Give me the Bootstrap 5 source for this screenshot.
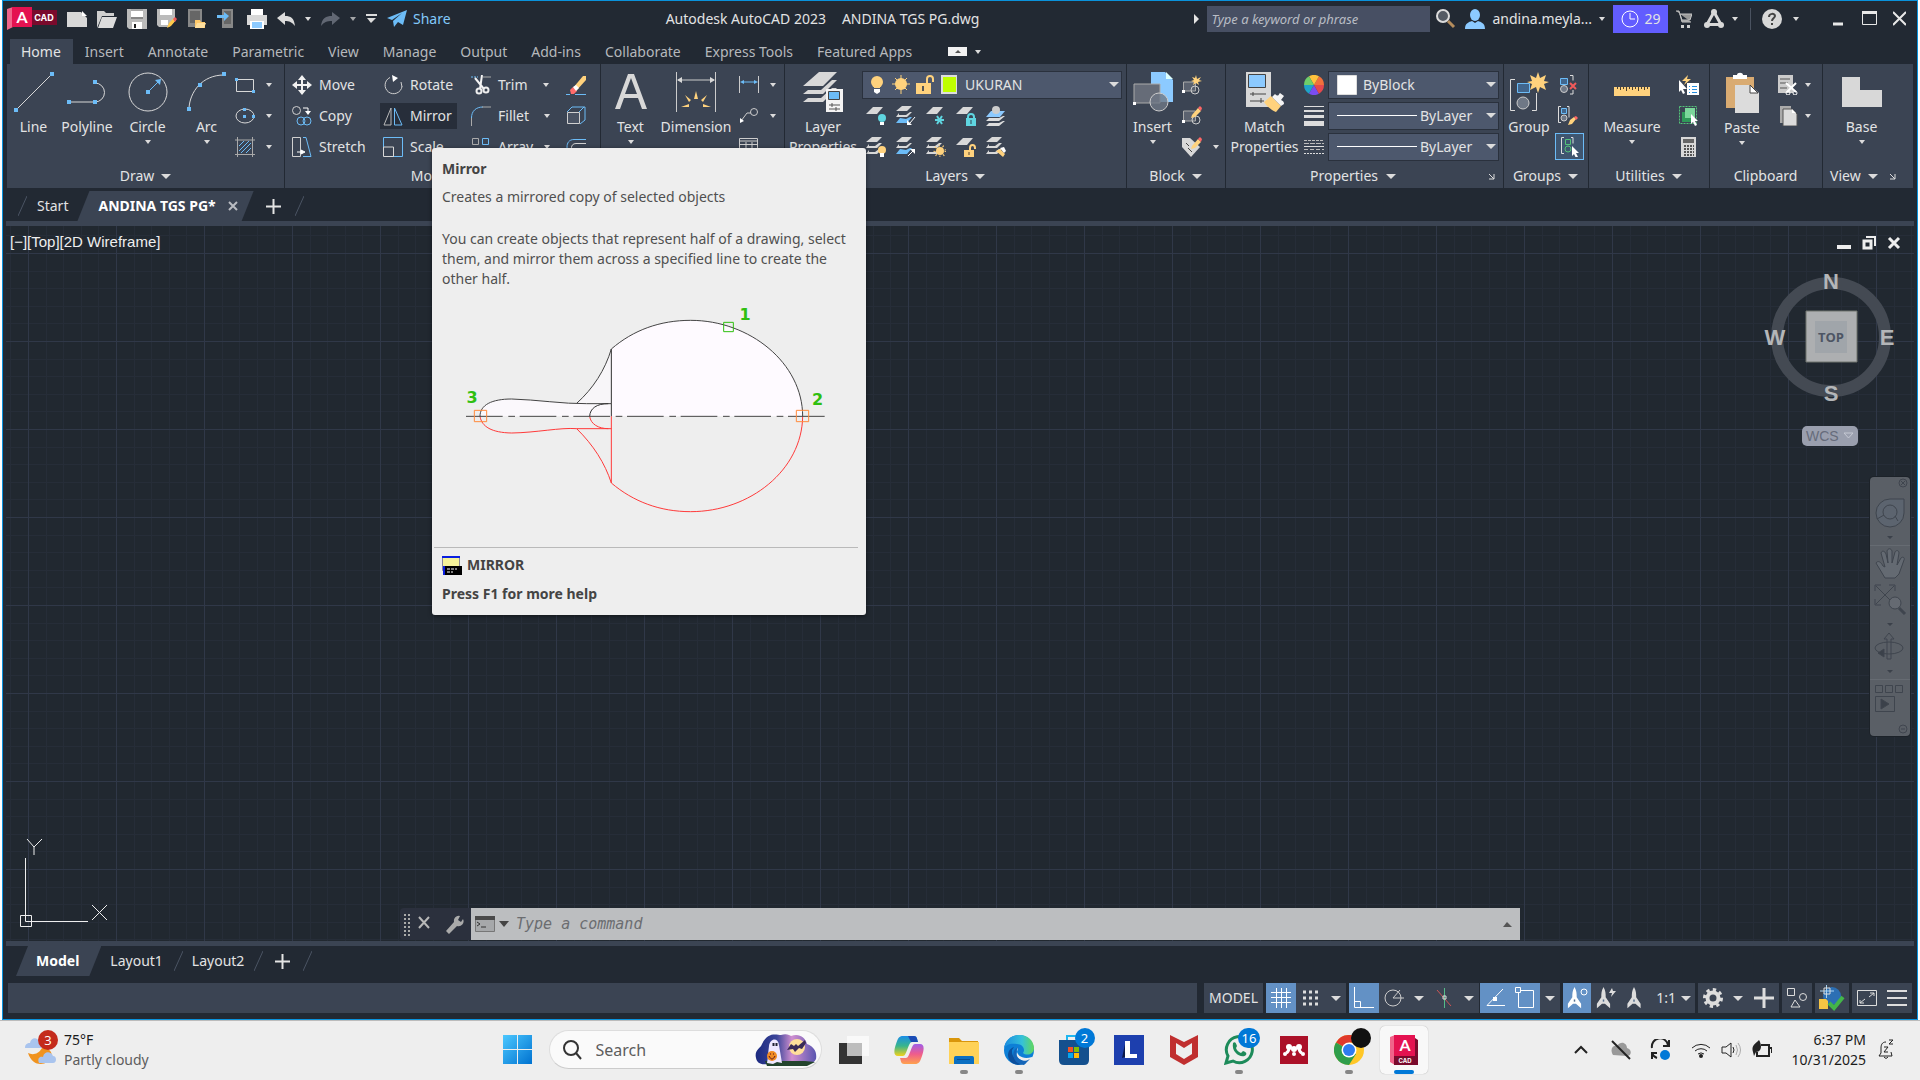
<!DOCTYPE html>
<html lang="en">
<head>
<meta charset="utf-8">
<meta name="viewport" content="width=device-width, initial-scale=1">
<title>Autodesk AutoCAD 2023 - ANDINA TGS PG.dwg</title>
<link href="https://cdn.jsdelivr.net/npm/bootstrap@5.3.0/dist/css/bootstrap.min.css" rel="stylesheet">
<style>
:root{--ink:#e2e3e4;--panel:#3b4453;--frame:#222933;--blue:#6cbcf7;--gold:#ffd27d;--grey:#d8d8d8}
body{font-family:"Noto Sans","Open Sans",sans-serif;font-size:14px;line-height:20px;background:#fff;overflow:hidden}
button,select,input{font:inherit;color:inherit}
svg{display:block;flex:none;fill:none}
button,.plain{background:none;border:0;padding:0;color:inherit;text-decoration:none}
.win{margin:0 2px;border:1px solid #0a92dc;background:var(--frame);color:var(--ink)}
.car{display:inline-block;flex:none;width:0;height:0;border:3px solid transparent;border-top:4px solid #dcdcdc;border-bottom:0}
.car.big{border-width:5px;border-top-width:5px;border-bottom:0}
.titlebar{height:38px;padding-bottom:3px}
.kwbox{width:223px;height:26px;background:#474f63;border:0;padding:0 4px;font-style:italic;font-size:13px}
.kwbox::placeholder{color:#b9bdc5;opacity:1}
.trial{background:#625dff;width:55px;height:28px}
.rtabs{height:25px;padding-left:7px;color:#b5b8bc}
.rtab{height:25px;padding:0 12px;color:inherit;text-decoration:none;line-height:25px}
.rtab.on{background:var(--panel);color:var(--ink);padding:0 12px 0 11px}
.ribbon{height:124px;background:var(--panel)}
.pn{box-shadow:inset 1px 0 var(--frame);display:flex;flex-direction:column;min-width:0}
.pn:first-child{box-shadow:none}
.pbody{height:98px;padding-top:5px;display:grid;align-items:start}
.ptitle{height:26px;line-height:24px;padding-top:2px;display:flex;align-items:center;justify-content:center;gap:7px}
.bigb{display:flex;flex-direction:column;align-items:center;padding-top:3px;white-space:nowrap;text-align:center}
.bigb svg{margin-bottom:5px}
.bigb .car{margin-top:3px}
.stack{display:flex;flex-direction:column}
.srow{height:31px;display:flex;align-items:center}
.sb{height:26px;padding:0 3px;display:flex;align-items:center;gap:7px;white-space:nowrap}
.sb.hot{background:#272e3a;padding-right:5px}
.icg{gap:10px;padding-left:4px}
.combo{height:28px;background:#4d586d;border:1px solid #2a313d;display:flex;align-items:center;flex:1;min-width:0;padding-right:2px}
.combo select{appearance:none;background:none;border:0;padding:0;flex:1;min-width:0;outline:0}
.combo option{color:#222}
.grpon{border:1px solid #6cbcf7;background:#3f5670;width:29px;height:27px;display:flex;align-items:center;justify-content:center}
.ftabs{height:33px;padding-left:15px}
.slant{clip-path:polygon(12px 0,100% 0,calc(100% - 12px) 100%,0 100%);background:var(--panel);height:30px;color:#fff;font-weight:700;display:flex;align-items:center}
.slash{width:9px;height:20px;flex:none}
.strip{height:5px;background:var(--panel);margin:0 3px;flex:none}
.cv{margin:0 3px;position:relative;background-color:#212830;background-position:22px 0,0 27px,22px 0,0 27px;background-size:88px 88px;
background-image:linear-gradient(90deg,#303848 1px,transparent 1px),linear-gradient(#303848 1px,transparent 1px),
linear-gradient(90deg,transparent 18px,#262d38 18px,#262d38 19px,transparent 19px,transparent 35px,#262d38 35px,#262d38 36px,transparent 36px,transparent 53px,#262d38 53px,#262d38 54px,transparent 54px,transparent 70px,#262d38 70px,#262d38 71px,transparent 71px),
linear-gradient(transparent 18px,#262d38 18px,#262d38 19px,transparent 19px,transparent 35px,#262d38 35px,#262d38 36px,transparent 36px,transparent 53px,#262d38 53px,#262d38 54px,transparent 54px,transparent 70px,#262d38 70px,#262d38 71px,transparent 71px)}
.vlabel{position:absolute;left:4px;top:6px;font-family:"Liberation Sans",sans-serif;font-size:15px;color:#eee}
.vwin{position:absolute;right:13px;top:10px;gap:11px}
.vcube{position:absolute;right:19px;top:42px}
.wcs{position:absolute;right:56px;top:200px;width:56px;height:20px;border-radius:5px;background:#9a9fae;color:#666c7b;font:14px/20px "Liberation Sans",sans-serif;display:flex;align-items:center;justify-content:space-between;padding:0 4px}
.navb{position:absolute;right:4px;top:251px;width:40px;height:259px;border-radius:4px;background:#5a5f66;box-shadow:0 0 0 1px #1c2229;overflow:hidden}
.ucs{position:absolute;left:12px;bottom:10px}
.cmd{position:absolute;left:394px;right:394px;bottom:1px;height:32px}
.cmdl{width:71px;background:#2b303d;border-radius:4px 0 0 4px}
.cmdr{background:#bcbec0;color:#666}
.cmdr input{background:none;border:0;outline:0;font:italic 15px "DejaVu Sans Mono",monospace;padding:0;margin-left:5px}
.cmdr input::placeholder{color:#6b6d70;opacity:1}
.ltabs{height:30px;padding-left:13px}
.sbar{height:30px;margin:7px 5px 6px;gap:3px}
.seg{background:var(--panel);display:flex;align-items:center;height:30px}
.it{width:30px;height:30px;display:flex;align-items:center;justify-content:center}
.it.on{background:#6391c5}
.dd{width:20px;height:30px;display:flex;align-items:center;justify-content:center}
.tbar{height:60px;background:#eee;border-top:1px solid #bbb;color:#1b1b1b;padding-bottom:2px}
.wside{flex:1 1 0;min-width:0}
.find{width:273px;height:39px;border-radius:20px;background:#fafafa;border:1px solid #ddd;border-bottom-color:#ccc}
.find input{border:0;background:none;outline:0;font-size:16px;min-width:0}
.find input::placeholder{color:#5d5d5d;opacity:1}
.app{width:48px;height:48px;margin-right:7px;position:relative;display:flex;align-items:center;justify-content:center}
.app.run::after{content:"";position:absolute;bottom:0;left:20px;width:8px;height:4px;border-radius:2px;background:#868686}
.app.act{background:#f8f8f8;border-radius:5px;box-shadow:0 0 1px #999;margin-right:0}
.app.act::after{background:#0078d7;left:14px;width:20px}
.bub{position:absolute;height:20px;min-width:20px;padding:0 4px;border-radius:10px;background:#0078d7;color:#fff;font-size:13px;line-height:20px;text-align:center}
.bub.dark{background:#111}
.ttip{position:absolute;left:432px;top:148px;width:434px;background:#eee;color:#505050;border-radius:3px;padding:11px 0 11px;box-shadow:0 1px 4px rgba(0,0,0,.5);z-index:5}
.ttip p{margin:0 10px}
.ttip hr{margin:8px 8px 7px 2px;opacity:1;border-color:#b9b9b9}
.tip-h{font-weight:700;color:#444}
</style>
<script src="https://cdn.jsdelivr.net/npm/bootstrap@5.3.0/dist/js/bootstrap.bundle.min.js"></script>
</head>
<body class="vh-100 d-flex flex-column">
<svg width="0" height="0" class="position-absolute" aria-hidden="true">
<defs>
<symbol id="leaf" viewBox="0 0 20 20"><path d="M7 1H17L11 8H0Z" fill="#d8d8d8"/></symbol>
<symbol id="leaves" viewBox="0 0 20 20"><path d="M6 0H16L11 5H0Z M3 7l-3 4h11l5-5h-3l-4 3H3zM3 13l-3 4h11l5-5h-3l-4 3H3z" fill="#d8d8d8"/></symbol>
<symbol id="bleaves" viewBox="0 0 20 20"><path d="M6 0H16L11 5H0Z M3 7l-3 4h11l5-5h-2l-4 3H3z" fill="#d8d8d8"/><path d="M4 12l-4 5h11l5-6h-2l-4 2z" fill="#6cbcf7"/></symbol>
<symbol id="ann" viewBox="0 0 20 30"><path d="M10 0c3 5 3 9 3 14l6 9v6l-7-6h-4l-7 6v-6l6-9C7 9 7 5 10 0z" fill="currentColor"/><path d="M9 17h2v3H9z" fill="#55708f"/></symbol>
</defs>
</svg>

<main class="win flex-grow-1 d-flex flex-column">
<!-- title bar -->
<header class="titlebar d-flex align-items-center">
  <button class="ms-1" aria-label="Application menu"><svg width="50" height="23" viewBox="0 0 50 23"><path d="M0 2l6-2v20l-6 3z" fill="#f0648a"/><path d="M5 0h20v20H5z" fill="#e41250"/><path d="M25 3h25v15H25z" fill="#7a0a2c"/><text x="15" y="16" text-anchor="middle" font-size="16" font-weight="700" fill="#fff" font-family="Lato">A</text><text x="37" y="14" text-anchor="middle" font-size="9" font-weight="700" fill="#fff" font-family="Inter">CAD</text></svg></button>
  <div class="d-flex align-items-center" style="gap:10px;margin-left:10px">
    <button aria-label="New"><svg width="20" height="20"><path d="M0 3H14L20 9V18H0Z" fill="#d8d8d8"/><path d="M15 2l5 5h-5z" fill="#fff"/></svg></button>
    <button aria-label="Open"><svg width="20" height="20"><path d="M0 19V2h7l2 2h8v3H5z" fill="#cfcfcf"/><path d="M5 8h15l-4 11H1z" fill="#dcdcdc"/></svg></button>
    <button aria-label="Save"><svg width="20" height="20"><path d="M0 0h20v20H2l-2-2z" fill="#bbb"/><path d="M4 0h12v8H4z" fill="#fff"/><path d="M4 1h12M4 9h12" stroke="#555"/><path d="M5 13h10v7H5z" fill="#fff"/><path d="M7 15h2v4H7z" fill="#222"/></svg></button>
    <button aria-label="Save As"><svg width="20" height="20"><path d="M0 0h18v12l-6 6H2l-2-2z" fill="#bbb"/><path d="M3 0h12v6H3zM4 11h7v5H4z" fill="#fff"/><path d="M10 19l2-5 5-5 2 2-5 6z" fill="#ffc94a"/><path d="M16 10l2-2 2 2-2 3z" fill="#ee5a5a"/></svg></button>
    <button aria-label="Open from Web and Mobile"><svg width="20" height="20"><path d="M1 0h14v18H1z" fill="#888"/><path d="M3 2h10v12H3z" fill="#666"/><path d="M8 19v-8h5l1 2h4v6z" fill="#ffc96a"/><path d="M10 14h9l-2 5H8z" fill="#ffdf9d"/></svg></button>
    <button aria-label="Save to Web and Mobile"><svg width="20" height="20"><path d="M5 0h11v19H5z" fill="#888"/><path d="M7 2h7v13H7z" fill="#666"/><path d="M0 6h7V3l5 4-5 5V9H0z" fill="#6cbcf7"/></svg></button>
    <button aria-label="Plot"><svg width="20" height="20"><path d="M4 0h12v6H4z" fill="#fff"/><path d="M0 6h20v10H0z" fill="#d8d8d8"/><path d="M3 12h14v8H3z" fill="#fff"/><path d="M5 13h10v6H5z" fill="#8ccaff"/></svg></button>
    <button aria-label="Undo"><svg width="18" height="20"><path d="M0 9l8-6v4c6 0 9 2 10 10-3-4-6-5-10-5v4z" fill="#dcdcdc"/></svg></button>
    <span class="car"></span>
    <button aria-label="Redo"><svg width="19" height="20"><path d="M19 9l-8-6v4C5 7 1 9 0 17c3-4 6-5 11-5v4z" fill="#616773"/></svg></button>
    <span class="car" style="opacity:.7"></span>
    <button aria-label="Customize"><svg width="11" height="10"><path d="M0 1h11" stroke="#dcdcdc" stroke-width="2"/><path d="M1 4h9L5 9z" fill="#dcdcdc"/></svg></button>
    <button class="d-flex align-items-center" style="gap:6px;color:#82c9fb"><svg width="20" height="20"><path d="M0 9L20 1 16 16l-5-3-4 5-1-6 9-8-10 7z" fill="#6cbcf7"/></svg>Share</button>
  </div>
  <div class="flex-grow-1 d-flex justify-content-center gap-3" style="padding-right:532px;margin-right:-532px"><span>Autodesk AutoCAD 2023</span><span>ANDINA TGS PG.dwg</span></div>
  <div class="d-flex align-items-center position-relative" style="margin-right:11px">
    <svg width="5" height="10" class="me-2"><path d="M0 0l5 5-5 5z" fill="#e4e4e4"/></svg>
    <input class="kwbox" type="text" placeholder="Type a keyword or phrase" aria-label="Search help">
    <button style="margin-left:6px" aria-label="Search"><svg width="20" height="20"><circle cx="7" cy="7" r="6" stroke="#dcdcdc" stroke-width="2" fill="#555b64"/><path d="M12 12l6 6" stroke="#b48c5c" stroke-width="3"/></svg></button>
    <button class="d-flex align-items-center" style="margin-left:9px;gap:7px"><svg width="20" height="20"><ellipse cx="10" cy="6" rx="5" ry="6" fill="#8ccaff"/><path d="M0 20c0-6 4-7 7-8l3 2 3-2c3 1 7 2 7 8z" fill="#8ccaff"/></svg>andina.meyla...<span class="car"></span></button>
    <button class="trial d-flex align-items-center justify-content-center ms-2 gap-1"><svg width="20" height="20"><circle cx="10" cy="10" r="8" stroke="#fff"/><path d="M10 4v6h5" stroke="#fff"/></svg>29</button>
    <button class="ms-2" aria-label="Autodesk App Store"><svg width="16" height="18"><path d="M0 1h3l3 11h9M4 4h12l-2 6H6z" stroke="#c4c4c4" fill="#999"/><path d="M5 15h3v3H5zM11 15h3v3h-3z" fill="#d0d0d0"/></svg></button>
    <button class="d-flex align-items-center ms-2 gap-2 px-1" aria-label="Stay connected"><svg width="20" height="20"><path d="M10 3L3 15.500h14z" stroke="#d8d8d8" stroke-width="3"/><circle cx="10" cy="3" r="3" fill="#d8d8d8"/><circle cx="3" cy="16" r="3" fill="#d8d8d8"/><circle cx="17" cy="16" r="3" fill="#d8d8d8"/></svg><span class="car"></span></button>
    <span style="width:1px;height:22px;background:#4a5260;margin:0 11px 0 8px"></span>
    <button class="d-flex align-items-center" style="gap:11px" aria-label="Help"><svg width="20" height="20"><circle cx="10" cy="10" r="10" fill="#d8d8d8"/><path d="M7 8c0-4 6-4 6-1 0 2-3 2-3 5M10 14v2" stroke="#444" stroke-width="2"/></svg><span class="car"></span></button>
    <button style="margin-left:34px" aria-label="Minimize"><svg width="10" height="16"><path d="M0 13h10" stroke="#e8e8e8" stroke-width="3"/></svg></button>
    <button style="margin-left:19px" aria-label="Maximize"><svg width="15" height="16"><path d="M0 1.500h15" stroke="#e8e8e8" stroke-width="3"/><path d="M.500 1v12.500h14V1" stroke="#e8e8e8"/></svg></button>
    <button style="margin-left:16px" aria-label="Close"><svg width="13" height="16"><path d="M0 1l13 13M13 1L0 14" stroke="#e8e8e8" stroke-width="2"/></svg></button>
  </div>
</header>

<!-- ribbon tabs -->
<nav class="rtabs d-flex align-items-center">
  <a class="rtab on" href="#">Home</a><a class="rtab" href="#">Insert</a><a class="rtab" href="#">Annotate</a><a class="rtab" href="#">Parametric</a><a class="rtab" href="#">View</a><a class="rtab" href="#">Manage</a><a class="rtab" href="#">Output</a><a class="rtab" href="#">Add-ins</a><a class="rtab" href="#">Collaborate</a><a class="rtab" href="#">Express Tools</a><a class="rtab" href="#">Featured Apps</a>
  <button class="d-flex align-items-center gap-2" style="margin-left:24px" aria-label="Minimize ribbon"><svg width="19" height="9"><path d="M0 0h19v9H0z" fill="#f2f2f2"/><path d="M7 6l3-3 3 3z" fill="#555"/></svg><span class="car"></span></button>
</nav>

<!-- ribbon -->
<section class="ribbon d-flex mx-1">
  <div class="pn" style="flex:277 1 0">
    <div class="pbody" style="grid-template-columns:53px 54px 67px 51px 1fr">
      <button class="bigb"><svg width="40" height="40"><path d="M3 37L38 2" stroke="#d8d8d8"/><path d="M0 36h4v4H0zM36 0h4v4h-4z" fill="#6cbcf7"/></svg>Line</button>
      <button class="bigb"><svg width="40" height="40"><path d="M2 30h26a9 9 0 0 0 0-19" stroke="#d8d8d8"/><path d="M0 28h4v4H0zM26 28h4v4h-4zM26 8h4v4h-4z" fill="#6cbcf7"/></svg>Polyline</button>
      <button class="bigb"><svg width="40" height="40"><circle cx="20" cy="20" r="19" stroke="#d8d8d8"/><path d="M20 20L31 9" stroke="#6cbcf7"/><path d="M18 18h4v4h-4zM33 7l-1 6-5-5z" fill="#6cbcf7"/></svg>Circle<span class="car"></span></button>
      <button class="bigb"><svg width="40" height="40"><path d="M2 36C3 20 15 3 37 3" stroke="#d8d8d8"/><path d="M0 35h4v4H0zM11 11h4v4h-4zM35 0h4v4h-4z" fill="#6cbcf7"/></svg>Arc<span class="car"></span></button>
      <div class="stack">
        <div class="srow"><button class="sb" aria-label="Rectangle"><svg width="20" height="20"><path d="M1.500 4.500h17v12h-17z" stroke="#d8d8d8"/><path d="M0 3h3v3H0zM17 15h3v3h-3z" fill="#6cbcf7"/></svg><span class="car ms-1"></span></button></div>
        <div class="srow"><button class="sb" aria-label="Ellipse"><svg width="20" height="20"><ellipse cx="10" cy="10" rx="9" ry="7" stroke="#d8d8d8"/><path d="M8 2h3v3H8zM8 9h3v3H8zM17 9h3v3h-3z" fill="#6cbcf7"/></svg><span class="car ms-1"></span></button></div>
        <div class="srow"><button class="sb" aria-label="Hatch"><svg width="20" height="20"><path d="M0 3h20M0 17.500h20M2.500 0v20M17.500 0v20" stroke="#aaa"/><path d="M4 9l5-5M4 14L14 4M6 16L16 6M11 16l5-5" stroke="#6cbcf7"/></svg><span class="car ms-1"></span></button></div>
      </div>
    </div>
    <div class="ptitle">Draw<span class="car big"></span></div>
  </div>

  <div class="pn" style="flex:316 1 0">
    <div class="pbody" style="grid-template-columns:91px 88px 95px 1fr;padding-left:5px">
      <div class="stack">
        <div class="srow"><button class="sb"><svg width="20" height="20"><path d="M10 0l4 5h-3v4h4V6l5 4-5 4v-3h-4v4h3l-4 5-4-5h3v-4H5v3l-5-4 5-4v3h4V5H6z" fill="#f2f2f2"/></svg>Move</button></div>
        <div class="srow"><button class="sb"><svg width="20" height="20"><circle cx="4.500" cy="4.500" r="4" stroke="#d0d0d0"/><circle cx="9" cy="15" r="4" stroke="#6cbcf7"/><circle cx="15" cy="15" r="4" stroke="#6cbcf7"/><path d="M11 2h5v4" stroke="#fff"/><path d="M13 5h6l-3 4z" fill="#fff"/></svg>Copy</button></div>
        <div class="srow"><button class="sb"><svg width="20" height="20"><path d="M.500.500h8v19h-8z" stroke="#d0d0d0"/><path d="M11 .500h3l5 19h-8" stroke="#6cbcf7"/><path d="M5 15h5M9 13l4 2-4 2z" stroke="#fff" fill="#fff"/></svg>Stretch</button></div>
      </div>
      <div class="stack">
        <div class="srow"><button class="sb"><svg width="20" height="20"><path d="M7 2.500a8.500 8.500 0 1 0 12 9M18 7l1 5" stroke="#d0d0d0"/><path d="M9 0l6 3-5 4z" fill="#fff"/></svg>Rotate</button></div>
        <div class="srow"><button class="sb hot"><svg width="20" height="20"><path d="M8 2v17H1z" stroke="#b8b8b8"/><path d="M11.500 2v17H19z" stroke="#6cbcf7"/></svg>Mirror</button></div>
        <div class="srow"><button class="sb"><svg width="20" height="20"><path d="M.500 10V.500h19v19H10" stroke="#6cbcf7"/><path d="M.500 10h10v9.500H.500z" stroke="#d8d8d8"/></svg>Scale</button></div>
      </div>
      <div class="stack">
        <div class="srow"><button class="sb"><svg width="20" height="20"><path d="M0 2h7" stroke="#6cbcf7" stroke-dasharray="2 1"/><path d="M12 2h8" stroke="#aaa"/><path d="M4 3l9 11M11 0L9 14" stroke="#f4f4f4" stroke-width="2"/><circle cx="8" cy="16" r="2.500" stroke="#eee" stroke-width="2"/><circle cx="15" cy="15" r="2.500" stroke="#eee" stroke-width="2"/></svg>Trim<span class="car ms-2"></span></button></div>
        <div class="srow"><button class="sb"><svg width="20" height="20"><path d="M.500 20V11" stroke="#aaa"/><path d="M.500 12C.500 5 5 1 12 1" stroke="#6cbcf7"/><path d="M11 1h9" stroke="#aaa"/></svg>Fillet<span class="car ms-2"></span></button></div>
        <div class="srow"><button class="sb"><svg width="20" height="20"><path d="M1.500 1.500h6v6h-6z" stroke="#aaa"/><path d="M11.500 1.500h6v6h-6zM1.500 12.500h6v6h-6zM11.500 12.500h6v6h-6z" stroke="#6cbcf7"/></svg>Array<span class="car ms-1"></span></button></div>
      </div>
      <div class="stack">
        <div class="srow"><button class="sb" aria-label="Erase"><svg width="20" height="20"><path d="M7 13L17 1l3 0v4L10 16z" fill="#ffd27d"/><path d="M4 15l3-3 4 4-3 3H5z" fill="#ff6b6b"/><path d="M7 12l3-2 3 3-3 3z" fill="#fff"/><path d="M0 19.500h4M9 19.500h11" stroke="#6cbcf7"/></svg></button></div>
        <div class="srow"><button class="sb" aria-label="Explode"><svg width="20" height="20"><path d="M1 6l5-5h13v13l-5 4M13 6l5-5" stroke="#6cbcf7"/><path d="M1.500 6.500h12v11h-12z" stroke="#d0d0d0" fill="#4a5363"/></svg></button></div>
        <div class="srow"><button class="sb" aria-label="Offset"><svg width="20" height="20"><path d="M20 2.500H8C3 2.500 1 6 1 10s2 9 7 9" stroke="#6cbcf7"/><path d="M20 6.500H10c-6 0-6 8 0 8" stroke="#d0d0d0"/></svg></button></div>
      </div>
    </div>
    <div class="ptitle">Modify<span class="car big"></span></div>
  </div>

  <div class="pn" style="flex:184 1 0">
    <div class="pbody" style="grid-template-columns:61px 70px 1fr">
      <button class="bigb"><svg width="34" height="40"><path d="M1 37L14 2h6l13 35h-5l-4-11H10L6 37zM11 22h12L17 6z" fill="#d8d8d8" fill-rule="evenodd"/></svg>Text<span class="car"></span></button>
      <button class="bigb"><svg width="40" height="40"><path d="M.500 0v40M39.500 0v40M2 8h36" stroke="#ccc"/><path d="M1 8l5-3v6zM39 8l-5-3v6z" fill="#d8d8d8"/><path d="M18 27l2-8 2 8zM13 30l-4-7 6 5zM27 30l4-7-6 5zM5 35l8-3v3zM35 35l-8-3v3z" fill="#ffd27d"/></svg>Dimension</button>
      <div class="stack" style="padding-left:5px">
        <div class="srow"><button class="sb" aria-label="Linear"><svg width="20" height="20"><path d="M.500 1v17M19.500 1v17" stroke="#ccc"/><path d="M3 7h14" stroke="#6cbcf7"/><path d="M1 7l4-2v4zM19 7l-4-2v4z" fill="#6cbcf7"/></svg><span class="car ms-1"></span></button></div>
        <div class="srow"><button class="sb" aria-label="Leader"><svg width="20" height="20"><circle cx="15" cy="6" r="3.500" stroke="#ccc"/><path d="M12 7H8l-6 8" stroke="#ccc"/><path d="M1 17v-5l4 3z" fill="#fff"/></svg><span class="car ms-1"></span></button></div>
        <div class="srow"><button class="sb" aria-label="Table"><svg width="20" height="20"><path d="M.500 1.500h18v17H.500zM.500 4h18M.500 7.500h18M.500 13h18M7 5v13M13 5v13" stroke="#ccc"/></svg></button></div>
      </div>
    </div>
    <div class="ptitle">Annotation<span class="car big"></span></div>
  </div>

  <div class="pn" style="flex:342 1 0">
    <div class="pbody" style="grid-template-columns:78px 1fr">
      <button class="bigb"><svg width="40" height="40"><path d="M16 0h18L20 14H0z M5 18l-5 4h20L34 8h-5L18 18z M5 26l-5 4h20L34 16l-5 0-11 10z" fill="#d8d8d8"/><path d="M23 17h17v23H23z" fill="#f4f4f4"/><path d="M25.500 19.500h11v8h-11z" fill="#6cbcf7" stroke="#444"/><path d="M26 33h11M26 37h11M29 31v4M33 35v4" stroke="#555"/></svg>Layer<br>Properties</button>
      <div class="stack" style="padding-right:4px">
        <div class="srow"><div class="combo"><svg width="90" height="20" class="ms-1 me-1"><circle cx="10" cy="7" r="6" fill="#ffd27d"/><path d="M7 10h6v3H7z" fill="#ffd27d"/><path d="M7 14h6v3l-3 2-3-2z" fill="#fff"/><circle cx="34" cy="9" r="6" fill="#ffd27d"/><path d="M34 0v19M25 9h18M28 3l12 12M40 3L28 15" stroke="#ffd27d"/><path d="M49 8h15v11H49z" fill="#ffd27d"/><path d="M60 8V4c0-4 6-4 6 0v3" stroke="#ffd27d" stroke-width="2"/><path d="M56 11v5" stroke="#555" stroke-width="2"/><path d="M75 1h15v17H75z" fill="#bfff00" stroke="#ddd" stroke-width="2"/></svg><select class="ps-1" aria-label="Layer"><option>UKURAN</option></select><span class="car big"></span></div></div>
        <div class="srow icg">
          <button aria-label="Layer off"><svg width="20" height="20"><use href="#leaf" width="20" height="20"/><circle cx="16" cy="12" r="4" fill="#5fd5e0"/><path d="M14 16h4v3h-4z" fill="#fff"/></svg></button>
          <button aria-label="Isolate"><svg width="20" height="20"><use href="#bleaves" width="20" height="20"/><path d="M19 11l-5 6" stroke="#fff"/><path d="M11 19v-5l5 5z" fill="#fff"/></svg></button>
          <button aria-label="Freeze"><svg width="20" height="20"><use href="#leaf" width="20" height="20"/><path d="M9 14h9M11 10l5 8M16 10l-5 8" stroke="#5fd5e0" stroke-width="2"/></svg></button>
          <button aria-label="Lock"><svg width="20" height="20"><use href="#leaf" width="20" height="20"/><path d="M10 12h10v8H10z" fill="#5fd5e0"/><path d="M12 12v-1c0-4 6-4 6 0v1" stroke="#5fd5e0" stroke-width="2"/><path d="M15 14v4" stroke="#345"/></svg></button>
          <button aria-label="Make current"><svg width="20" height="20"><path d="M5 5h14l-5 6H0z" fill="#8ccaff"/><circle cx="10" cy="4" r="4" fill="#ccc"/><path d="M3 12l-3 3h13l6-5h-2l-4 2zM3 17l-3 3h13l6-5h-2l-4 2z" fill="#ddd"/></svg></button>
        </div>
        <div class="srow icg">
          <button aria-label="Turn all on"><svg width="20" height="20"><use href="#leaves" width="20" height="20"/><circle cx="16" cy="13" r="4" fill="#ffd27d"/><path d="M14 16h4v4h-4z" fill="#fff"/></svg></button>
          <button aria-label="Unisolate"><svg width="20" height="20"><use href="#bleaves" width="20" height="20"/><path d="M12 19l5-5" stroke="#fff"/><path d="M19 12v5l-5-5z" fill="#fff"/></svg></button>
          <button aria-label="Thaw all"><svg width="20" height="20"><use href="#leaves" width="20" height="20"/><circle cx="14" cy="14" r="4" fill="#ffd27d"/><circle cx="14" cy="14" r="5.500" stroke="#ffd27d" stroke-dasharray="1 3" stroke-width="2"/></svg></button>
          <button aria-label="Unlock"><svg width="20" height="20"><use href="#leaf" width="20" height="20"/><path d="M8 13h10v7H8z" fill="#ffd27d"/><path d="M14 13v-2c0-4 5-4 5 0v1" stroke="#ffd27d" stroke-width="2"/><path d="M13 15v3" stroke="#543"/></svg></button>
          <button aria-label="Match layer"><svg width="20" height="20"><use href="#leaves" width="20" height="20"/><path d="M10 14l4-2 5 5-2 3z" fill="#ffd27d"/><path d="M14 11l4-1 2 4-2 2z" fill="#fff"/></svg></button>
        </div>
      </div>
    </div>
    <div class="ptitle">Layers<span class="car big"></span></div>
  </div>

  <div class="pn" style="flex:99 1 0">
    <div class="pbody" style="grid-template-columns:53px 1fr">
      <button class="bigb"><svg width="40" height="40"><path d="M18 0h14l8 8v22H18z" fill="#8ccaff"/><path d="M33 0l7 7h-7z" fill="#dff"/><path d="M1 12h26v19H1z" fill="#666c78" stroke="#aaa"/><circle cx="26" cy="30" r="9" fill="#6f7886" fill-opacity=".8" stroke="#ccc"/><path d="M0 30h3v3H0z" fill="#fff"/></svg>Insert<span class="car"></span></button>
      <div class="stack">
        <div class="srow"><button class="sb" aria-label="Create block"><svg width="20" height="20"><path d="M1.500 7h12v9h-12z" fill="#5b626f" stroke="#aaa"/><circle cx="13" cy="15" r="4" stroke="#ccc"/><path d="M0 15h3v3H0z" fill="#fff"/><path d="M14 0l1 4 4-2-2 3 3 1-4 1 1 3-3-2-3 2 1-3-3-1 3-1-2-3 3 1z" fill="#ffd27d"/></svg></button></div>
        <div class="srow"><button class="sb" aria-label="Edit block"><svg width="20" height="20"><path d="M1.500 5h12v10h-12z" fill="#5b626f" stroke="#aaa"/><circle cx="14" cy="14" r="4" stroke="#ccc"/><path d="M0 14h3v3H0z" fill="#fff"/><path d="M10 9l6-7 3 3-6 6-4 1z" fill="#ffd27d"/><path d="M16 2l2-2 2 2-1 3z" fill="#f66"/></svg></button></div>
        <div class="srow"><button class="sb" aria-label="Edit attributes"><svg width="20" height="20"><path d="M0 1l8 0 10 9-9 10L0 10z" fill="#d8d8d8"/><path d="M4 6l3 3M6 11l4 4" stroke="#444"/><path d="M10 9l6-7 3 3-6 6-4 1z" fill="#ffd27d"/><path d="M16 2l2-2 2 2-1 3z" fill="#f66"/></svg><span class="car ms-1"></span></button></div>
      </div>
    </div>
    <div class="ptitle">Block<span class="car big"></span></div>
  </div>

  <div class="pn" style="flex:278 1 0">
    <div class="pbody" style="grid-template-columns:79px 1fr">
      <button class="bigb"><svg width="40" height="40"><path d="M1 0h25v35H1z" fill="#d8d8d8"/><path d="M3.500 2.500h17v13h-17z" fill="#8ccaff" stroke="#444"/><path d="M5 22h16M8 20v4M5 29h14M16 26v5" stroke="#444"/><path d="M19 30l7-6 10 10-5 6c-3-1-9-5-12-10z" fill="#ffd27d"/><path d="M27 25l3-3c4 4 4-1 5-1l4 3-3 4c3 1 3 3 3 4l-3 2z" fill="#f4f4f4"/></svg>Match<br>Properties</button>
      <div class="stack" style="padding-right:4px">
        <div class="srow gap-1"><svg width="20" height="20"><path d="M10 10L15 1.300A10 10 0 0 1 20 10z" fill="#f2703c"/><path d="M10 10L5 1.300a10 10 0 0 1 10 0z" fill="#ffc23d"/><path d="M10 10H0A10 10 0 0 1 5 1.300z" fill="#6fce6a"/><path d="M10 10L5 18.700A10 10 0 0 1 0 10z" fill="#1fa3c8"/><path d="M10 10l5 8.700a10 10 0 0 1-10 0z" fill="#7a4df0"/><path d="M10 10h10a10 10 0 0 1-5 8.700z" fill="#e5484d"/></svg><div class="combo"><svg width="20" height="20" style="margin:0 6px 0 8px"><path d="M.500.500h19v19H.500z" fill="#fff" stroke="#ddd"/></svg><select aria-label="Object color"><option>ByBlock</option></select><span class="car big"></span></div></div>
        <div class="srow gap-1"><svg width="20" height="20"><path d="M0 .500h20" stroke="#ddd"/><path d="M0 5h20" stroke="#ddd" stroke-width="2"/><path d="M0 10.500h20" stroke="#ddd" stroke-width="3"/><path d="M0 17.500h20" stroke="#ddd" stroke-width="5"/></svg><div class="combo"><svg width="80" height="2" style="margin:0 3px 0 8px"><path d="M0 .500h80" stroke="#fff"/></svg><select aria-label="Lineweight"><option>ByLayer</option></select><span class="car big"></span></div></div>
        <div class="srow gap-1"><svg width="20" height="20"><path d="M0 3.500h20" stroke="#bbb" stroke-dasharray="3 1"/><path d="M0 6.500h20" stroke="#bbb" stroke-dasharray="5 1"/><path d="M0 9.500h20" stroke="#ddd"/><path d="M0 12.500h20" stroke="#bbb" stroke-dasharray="4 2"/><path d="M0 16.500h20" stroke="#ddd" stroke-dasharray="2 1"/></svg><div class="combo"><svg width="80" height="2" style="margin:0 3px 0 8px"><path d="M0 .500h80" stroke="#fff"/></svg><select aria-label="Linetype"><option>ByLayer</option></select><span class="car big"></span></div></div>
      </div>
    </div>
    <div class="ptitle"><span class="flex-grow-1 d-flex align-items-center justify-content-center gap-2">Properties<span class="car big"></span></span><button class="pe-2" aria-label="Properties dialog"><svg width="7" height="7"><path d="M1 1l5 5M6 1v5H1" stroke="#ddd"/></svg></button></div>
  </div>

  <div class="pn" style="flex:85 1 0">
    <div class="pbody" style="grid-template-columns:52px 1fr">
      <button class="bigb"><svg width="40" height="40"><path d="M6 7.500H1.500v31H6M23 38.500h4.500V21" stroke="#ddd"/><path d="M8.500 11.500h12v9h-12z" fill="#41668d" stroke="#6cbcf7"/><circle cx="14" cy="31" r="6" fill="#6f7886" stroke="#ccc"/><path d="M29 0l2 6 6-3-2 6 5 1-5 2 2 6-6-3-2 6-2-6-6 3 2-6-5-2 5-1-2-6 6 3z" fill="#ffd27d"/></svg>Group</button>
      <div class="stack">
        <div class="srow"><button class="sb" aria-label="Ungroup"><svg width="20" height="20"><path d="M2.500 3.500h7v6h-7z" fill="#41668d" stroke="#6cbcf7"/><circle cx="6" cy="14" r="3.500" fill="#6f7886" stroke="#ccc"/><path d="M12 .500h3v5M15 15v4h-3" stroke="#ddd"/><path d="M12 8l6 6M18 8l-6 6" stroke="#f05a5a" stroke-width="2"/></svg></button></div>
        <div class="srow"><button class="sb" aria-label="Group edit"><svg width="20" height="20"><path d="M3 .500H.500v16H3M9 .500h2v11" stroke="#ddd"/><path d="M3.500 2.500h5v5h-5z" fill="#41668d" stroke="#6cbcf7"/><circle cx="6" cy="12" r="3" fill="#6f7886" stroke="#ccc"/><path d="M10 19l2-5 4-3 2 2-4 5z" fill="#ffd27d"/><path d="M16 11l2-1 2 2-2 2z" fill="#f66"/></svg></button></div>
        <div class="srow"><button class="grpon" aria-label="Group selection"><svg width="20" height="20"><path d="M4 .500H1.500v16H4M11 .500h2v6" stroke="#ddd"/><path d="M5.500 2.500h5v5h-5z" stroke="#54c37a"/><circle cx="8" cy="12" r="3" stroke="#54c37a"/><path d="M12 9v10l2-2 2 4 2-1-2-4h3z" fill="#fff"/></svg></button></div>
      </div>
    </div>
    <div class="ptitle">Groups<span class="car big"></span></div>
  </div>

  <div class="pn" style="flex:121 1 0">
    <div class="pbody" style="grid-template-columns:88px 1fr">
      <button class="bigb"><svg width="36" height="40"><path d="M0 15h36v9H0z" fill="#ffd27d"/><path d="M3.500 15v2M6.500 15v3M9.500 15v2M12.500 15v4M15.500 15v2M18.500 15v3M21.500 15v2M24.500 15v4M27.500 15v2M30.500 15v3M33.500 15v2" stroke="#4a4030"/></svg>Measure<span class="car"></span></button>
      <div class="stack">
        <div class="srow"><button class="sb" aria-label="Quick select"><svg width="20" height="20"><path d="M0 5v12l2-2 2 4 2-1-2-4h4z" fill="#fff"/><path d="M9 0L3 6h4l-2 4 7-6H8z" fill="#ffd27d"/><path d="M8 8h12v12H8z" fill="#fff"/><path d="M10 11.500h1M13 11.500h5M10 14.500h1M13 14.500h5M10 17.500h1M13 17.500h5" stroke="#268fe0"/></svg></button></div>
        <div class="srow"><button class="sb" aria-label="Select all"><svg width="20" height="20"><path d="M.500.500h17v17H.500z" stroke="#54c37a" stroke-dasharray="2 1"/><path d="M3 6h10v10H3z" fill="#2f9959"/><path d="M6 2h10v10H6z" fill="#7bd69b"/><path d="M12 8v10l2-2 2 4 2-1-2-4h3z" fill="#fff"/></svg></button></div>
        <div class="srow"><button class="sb" aria-label="Calculator"><svg width="20" height="20"><path d="M2 0h15v20H2z" fill="#d8d8d8"/><path d="M4 2h11v4H4z" fill="#666"/><path d="M5 9h10M5 12h10M5 15h10M5 18h10" stroke="#555" stroke-width="2" stroke-dasharray="2 1"/></svg></button></div>
      </div>
    </div>
    <div class="ptitle">Utilities<span class="car big"></span></div>
  </div>

  <div class="pn" style="flex:113 1 0">
    <div class="pbody" style="grid-template-columns:66px 1fr">
      <button class="bigb"><svg width="34" height="41"><path d="M1 5h28v31H1z" fill="#d9ab72"/><path d="M8 3h4c0-3 6-3 6 0h4v4H8z" fill="#fff"/><path d="M10 13h15l9 8v20H10z" fill="#dcdcdc"/><path d="M25 13l8 8h-8z" fill="#fff" stroke="#444"/></svg>Paste<span class="car"></span></button>
      <div class="stack">
        <div class="srow"><button class="sb" aria-label="Cut"><svg width="20" height="20"><path d="M0 0h15v18H0z" fill="#ccc"/><path d="M2 4h10M2 8h8M2 13h7" stroke="#555"/><path d="M8 8l10 9M18 8L9 17" stroke="#fff" stroke-width="2"/><circle cx="10" cy="18" r="2" stroke="#fff"/><circle cx="17" cy="18" r="2" stroke="#fff"/></svg><span class="car"></span></button></div>
        <div class="srow"><button class="sb" aria-label="Copy clip"><svg width="20" height="20"><path d="M2 0h11v17H2z" fill="#aaa"/><path d="M5 3h9l5 5v12H5z" fill="#dcdcdc" stroke="#555"/><path d="M14 3l4 4h-4z" fill="#fff"/></svg><span class="car"></span></button></div>
      </div>
    </div>
    <div class="ptitle">Clipboard</div>
  </div>

  <div class="pn" style="flex:91 1 0">
    <div class="pbody" style="grid-template-columns:79px 1fr">
      <button class="bigb"><svg width="40" height="40"><path d="M0 5h18v13h22v17H0z" fill="#d8d8d8"/></svg>Base<span class="car"></span></button>
    </div>
    <div class="ptitle justify-content-start ps-2">View<span class="car big"></span><button class="ms-1" aria-label="View dialog"><svg width="7" height="7"><path d="M1 1l5 5M6 1v5H1" stroke="#ddd"/></svg></button></div>
  </div>
</section>

<!-- drawing tabs -->
<nav class="ftabs d-flex align-items-end">
  <div class="d-flex align-items-center" style="height:30px"><svg class="slash"><path d="M0 20L9 0" stroke="#4b5464"/></svg><a class="plain" href="#" style="margin:0 9px 0 10px">Start</a></div>
  <div class="slant" style="padding:0 16px 0 21px;gap:12px">ANDINA TGS PG*<button aria-label="Close tab"><svg width="10" height="10"><path d="M1 1l8 8M9 1l-8 8" stroke="#b9bcc2" stroke-width="2"/></svg></button></div>
  <div class="d-flex align-items-center" style="height:30px;gap:14px;margin-left:12px"><button aria-label="New drawing"><svg width="15" height="15"><path d="M7.500 0v15M0 7.500h15" stroke="#e4e4e4" stroke-width="2"/></svg></button><svg class="slash"><path d="M0 20L9 0" stroke="#4b5464"/></svg></div>
</nav>
<div class="strip"></div>

<!-- model space -->
<section class="cv flex-grow-1">
  <div class="vlabel">[−][Top][2D Wireframe]</div>
  <div class="vwin d-flex"><svg width="14" height="14"><path d="M0 11h14" stroke="#eee" stroke-width="4"/></svg><svg width="14" height="14"><path d="M4 1h9v9" stroke="#eee" stroke-width="2"/><path d="M2 5h7v7H2z" stroke="#eee" stroke-width="3"/></svg><svg width="14" height="14"><path d="M2 2l10 10M12 2L2 12" stroke="#eee" stroke-width="3"/></svg></div>
  <svg class="vcube" width="132" height="140" viewBox="0 0 132 140"><circle cx="68" cy="69" r="54" stroke="#444a53" stroke-width="12"/><path d="M43 43h51v51H43z" fill="#adafb1" stroke="#71756f"/><path d="M52 53h32v32H52z" fill="#a0a5aa"/><g font-family="Liberation Sans,sans-serif" font-weight="700" text-anchor="middle" fill="#b4b6b8"><text x="68" y="21" font-size="22">N</text><text x="68" y="133" font-size="22">S</text><text x="12" y="77" font-size="22">W</text><text x="124" y="77" font-size="22">E</text><text x="68" y="74" font-size="13" font-family="Open Sans,sans-serif" fill="#4d5564">TOP</text></g></svg>
  <button class="wcs">WCS<svg width="11" height="8"><path d="M1 1h9L5.500 6z" stroke="#c5c9d3"/></svg></button>
  <div class="navb"><svg width="40" height="259" viewBox="1870 477 40 259" stroke="#3f454e"><path d="M1870 545.500h40M1870 679.500h40" stroke="#666b72"/><circle cx="1903" cy="483" r="4"/><path d="M1901 481l4 4M1905 481l-4 4M1901 729h4"/><circle cx="1903" cy="729" r="4"/>
    <path d="M1890 499h14v14a14 14 0 1 1-14-14z" fill="#5c646f"/><circle cx="1890" cy="512" r="7"/><path d="M1877 519l7-4M1898 521l-3-5"/>
    <path d="M1887 536h6l-3 3zM1887 623h6l-3 3zM1887 670h6l-3 3z" fill="#3b414a" stroke="none"/>
    <path d="M1885 578c-3-5-6-10-9-15 2-3 5-1 7 3l2 1-4-14c1-3 4-2 5 1l2 9-1-12c1-3 4-3 5 0v12l3-11c1-2 4-2 4 1l-2 12 4-7c2-2 4 0 3 2l-5 14-4 4z" fill="#646a72"/>
    <path d="M1876 586l18 18M1894 586l-18 18M1875 591v-6h6M1889 585h6v6M1875 599v6h6"/><circle cx="1895" cy="603" r="6" fill="#656a72"/><path d="M1899 608l6 6" stroke-width="3"/>
    <path d="M1887 659v-20h-3l5-6 5 6h-3v20z"/><ellipse cx="1889" cy="648" rx="14" ry="6"/><path d="M1878 653l6-4v8z" fill="#3b414a"/>
    <path d="M1875.500 685.500h7v7h-7zM1885.500 685.500h7v7h-7zM1895.500 685.500h7v7h-7zM1875.500 696.500h19v15h-19z"/><path d="M1881 699l8 5-8 5z" fill="#3b414a"/></svg></div>
  <svg class="ucs" width="92" height="93" viewBox="18 838 92 93" stroke="#eee"><path d="M25.500 858v63.500H88M20.500 915.500h11v11h-11z"/><path d="M27 839l7 8v8M42 839l-8 8M92 905l15 15M107 905l-15 15"/></svg>
  <div class="cmd d-flex">
    <div class="cmdl d-flex align-items-center"><svg width="71" height="32"><path d="M5 6v22M9 6v22" stroke="#aaa" stroke-width="2" stroke-dasharray="2 2"/><path d="M19 9l10 11M29 9L19 20" stroke="#b8b8b8" stroke-width="2"/><path d="M46 23l8-9a5 5 0 0 1 6-6l-2 4 3 2 2-3a5 5 0 0 1-6 7l-8 8z" fill="#aaa"/></svg></div>
    <div class="cmdr flex-grow-1 d-flex align-items-center ps-1 pe-2"><svg width="20" height="16"><path d="M.500 1v14.500h19V1z" fill="#a6a8aa" stroke="#777"/><path d="M0 0h20v4H0z" fill="#4a4a4a"/><path d="M2 6l3 2-3 2M6 11h5" stroke="#333"/></svg><svg width="12" height="6" class="ms-1"><path d="M0 0h10L5 6z" fill="#444"/></svg><input class="flex-grow-1" type="text" placeholder="Type a command" aria-label="Command line"><svg width="9" height="5"><path d="M0 5h9L4 0z" fill="#555"/></svg></div>
  </div>
</section>
<div class="strip"></div>

<!-- layout tabs -->
<nav class="ltabs d-flex align-items-center">
  <a class="slant text-decoration-none" style="padding:0 22px 0 20px" href="#">Model</a>
  <a class="plain" style="margin:0 11px 0 9px" href="#">Layout1</a><svg class="slash"><path d="M0 20L9 0" stroke="#4b5464"/></svg>
  <a class="plain" style="margin:0 10px 0 9px" href="#">Layout2</a><svg class="slash"><path d="M0 20L9 0" stroke="#4b5464"/></svg>
  <button style="margin:0 13px 0 12px" aria-label="New layout"><svg width="15" height="15"><path d="M7.500 0v15M0 7.500h15" stroke="#e4e4e4" stroke-width="2"/></svg></button><svg class="slash"><path d="M0 20L9 0" stroke="#4b5464"/></svg>
</nav>

<!-- status bar -->
<footer class="sbar d-flex">
  <div class="seg flex-grow-1 me-1"></div>
  <button class="seg justify-content-center" style="width:59px">MODEL</button>
  <div class="seg" style="width:80px"><button class="it on" aria-label="Grid"><svg width="20" height="20"><path d="M5.500 0v20M10.500 0v20M15.500 0v20M0 4.500h20M0 9.500h20M0 14.500h20" stroke="#fff"/></svg></button><button class="it" aria-label="Snap"><svg width="16" height="18"><path d="M0 3h16M0 9h16M0 15h16" stroke="#ddd" stroke-width="3" stroke-dasharray="3 3"/></svg></button><span class="dd"><span class="car big"></span></span></div>
  <div class="seg" style="width:130px"><button class="it on" aria-label="Ortho"><svg width="20" height="22"><path d="M.500 0v20.500H20M.500 14.500h6v6" stroke="#fff"/></svg></button><button class="it" aria-label="Polar"><svg width="20" height="20"><circle cx="9" cy="10" r="8" stroke="#ccc"/><path d="M9 10h11M9 10l7-8" stroke="#ccc"/></svg></button><span class="dd"><span class="car big"></span></span><button class="it" aria-label="Isodraft"><svg width="20" height="20"><path d="M3 2l14 16" stroke="#c55"/><path d="M10.500 0v20" stroke="#5b8"/><path d="M9 8h3v3H9z" stroke="#ddd"/></svg></button><span class="dd"><span class="car big"></span></span></div>
  <div class="seg" style="width:80px;margin-left:-2px"><button class="it on" aria-label="Object snap tracking"><svg width="20" height="20"><path d="M18 1L2 17.500h18" stroke="#fff"/><path d="M8 9h4v4H8z" fill="#fff"/></svg></button><button class="it on" aria-label="Object snap"><svg width="20" height="22"><path d="M3 3.500h15.500v17h-15V6" stroke="#fff"/><path d="M.500.500h5v5h-5z" stroke="#fff" fill="#6391c5"/></svg></button><span class="dd"><span class="car big"></span></span></div>
  <div class="seg" style="width:132px"><button class="it on" aria-label="Annotation visibility"><svg width="22" height="22"><use href="#ann" width="17" height="22" color="#fff"/><circle cx="18" cy="5" r="3" stroke="#fff"/></svg></button><button class="it" aria-label="Auto scale"><svg width="22" height="22"><use href="#ann" width="17" height="22" color="#ddd"/><path d="M17 1l-3 5h3l-1 4 5-6h-3z" fill="#ddd"/></svg></button><button class="it" aria-label="Annotation scale"><svg width="20" height="22"><use href="#ann" width="20" height="22" color="#ddd"/></svg></button><span class="ms-1 ps-1">1:1</span><span class="dd"><span class="car big"></span></span></div>
  <div class="seg" style="width:51px"><button class="it" aria-label="Workspace"><svg width="20" height="20"><circle cx="10" cy="10" r="5.500" stroke="#ddd" stroke-width="4"/><circle cx="10" cy="10" r="8.500" stroke="#ddd" stroke-width="3" stroke-dasharray="3.300 3.300"/></svg></button><span class="dd"><span class="car big"></span></span></div>
  <button class="seg it" style="margin-left:-3px" aria-label="Annotation monitor"><svg width="20" height="20"><path d="M10 0v20M0 10h20" stroke="#ddd" stroke-width="3"/></svg></button>
  <button class="seg it" aria-label="Isolate objects"><svg width="20" height="20"><path d="M.500.500h7v7h-7z" stroke="#ddd"/><circle cx="16" cy="9" r="3.500" stroke="#ddd"/><path d="M8 12l-4 7h9z" stroke="#ddd"/></svg></button>
  <button class="seg it" style="width:34px" aria-label="Graphics performance"><svg width="26" height="26"><circle cx="13" cy="11" r="9" fill="#2c6fb4"/><path d="M1 6h14M7.500 0v13" stroke="#a9d4f5"/><path d="M5 3h6v6H5z" stroke="#ddd"/><path d="M0 14h7l2 2v8H0z" fill="#f6c544"/><path d="M10 18l5 5 9-11" stroke="#43b649" stroke-width="4"/></svg></button>
  <div class="seg" style="width:60px"><button class="it" aria-label="Clean screen"><svg width="20" height="16"><path d="M.500.500h19v15H.500z" stroke="#ddd"/><path d="M12 7l5-4M3 13l5-4M13 3h4v3M3 10v3h4" stroke="#ddd"/></svg></button><button class="it" aria-label="Customization"><svg width="20" height="18"><path d="M0 2h20M0 9h20M0 16h20" stroke="#ddd" stroke-width="2"/></svg></button></div>
</footer>
</main>

<!-- taskbar -->
<footer class="tbar d-flex align-items-center">
  <button class="wside d-flex align-items-center text-start" style="padding-left:24px;margin-right:11px"><svg width="36" height="40" class="me-1"><path d="M1 18c0-5 4-5 5-5 1-6 8-6 9-1 5 0 5 6 1 6z" fill="#a9c4ee"/><path d="M4 23c4 2 10 2 14-5 8 0 11 5 9 9-2 8-18 12-23-4z" fill="#f0931f"/><path d="M15 33c-2-5 1-7 4-6 1-6 8-6 10-1 4 0 4 7 0 7z" fill="#a9c4ee"/><circle cx="24" cy="10" r="10" fill="#c42b1c"/><text x="24" y="15" text-anchor="middle" font-size="13" fill="#fff" font-family="Open Sans">3</text></svg><span>75°F<br><span style="color:#5d5d5d">Partly cloudy</span></span></button>
  <div class="d-flex align-items-center">
    <button aria-label="Start"><svg width="30" height="30"><defs><linearGradient id="wg" x2="1" y2="1"><stop stop-color="#4cc8ff"/><stop offset="1" stop-color="#0072d0"/></linearGradient></defs><path d="M0 0h14v14H0zM15 0h14v14H15zM0 15h14v14H0zM15 15h14v14H15z" fill="url(#wg)"/></svg></button>
    <div class="find d-flex align-items-center" style="margin:0 8px 0 16px;padding:0 4px 0 13px"><svg width="19" height="20"><circle cx="8" cy="8" r="7" stroke="#333" stroke-width="2"/><path d="M13 13l5 6" stroke="#333" stroke-width="2"/></svg><input class="flex-grow-1" style="margin-left:12px" type="text" placeholder="Search" aria-label="Search"><svg width="62" height="32" viewBox="0 0 62 32"><defs><linearGradient id="hw"><stop stop-color="#1c2a80"/><stop offset=".35" stop-color="#3b4599"/><stop offset=".6" stop-color="#d08fd0"/><stop offset="1" stop-color="#5a55b0"/></linearGradient></defs><path d="M1 24c-2-8 5-10 6-14C13-3 22 1 26 1c5-2 9 0 10 1 8-3 14 1 16 8 8 3 10 9 9 15-3 6-9 4-13 5H12C6 31 2 29 1 24z" fill="url(#hw)"/><path d="M10 27h40l10 1-8 4H12z" fill="#24452d"/><circle cx="42" cy="13" r="8" fill="#ffdf9a"/><path d="M32 16l4-6 3 2 2-2 2 2 7-6 1 3-4 6-3-1-4 4-2-3z" fill="#3a2b58"/><path d="M12 29c1-5 1-10 2-17 1-8 9-9 10-1 1 6 2 12 3 18l-5-1-4 2z" fill="#efe8ff"/><path d="M18.500 9v3M21.500 9v3" stroke="#223" stroke-width="2"/><circle cx="17" cy="22" r="5" fill="#f08a24"/><path d="M14 22c2 4 4 4 6 0M15 20h1M18 20h1" stroke="#512"/></svg></div>
    <button class="app" aria-label="Task view"><svg width="30" height="30"><path d="M0 8h23v21H0z" fill="#333"/><path d="M8 1h22v20H8z" fill="#fafafa" fill-opacity=".85"/><path d="M8 8h15v13H8z" fill="#bdbdbd"/></svg></button>
    <button class="app" aria-label="Copilot"><svg width="30" height="30"><defs><linearGradient id="c1" y2="1" x2="0"><stop stop-color="#1a8ee8"/><stop offset=".5" stop-color="#39b58c"/><stop offset="1" stop-color="#f2d21b"/></linearGradient><linearGradient id="c2" y2="1" x2="0"><stop stop-color="#a05de8"/><stop offset=".5" stop-color="#ef5c8c"/><stop offset="1" stop-color="#ffa24d"/></linearGradient></defs><path d="M9 1h11c3 0 3 3 4 6h-6c-4 0-5 14-9 14H4c-5 0-4-6-2-12S5 1 9 1z" fill="url(#c1)"/><path d="M21 29H10c-3 0-3-3-4-6h6c4 0 5-14 9-14h5c5 0 4 6 2 12s-3 8-7 8z" fill="url(#c2)"/><path d="M14 1h6c3 0 3 3 4 6h-7z" fill="#1b4bb5"/></svg></button>
    <button class="app run" aria-label="File Explorer"><svg width="30" height="28"><path d="M0 2h10l3 3h16v8H0z" fill="#d9960b"/><path d="M0 6h30v22H0z" fill="#ffd257"/><path d="M5 28v-6c0-2 2-2 2-2h16s2 0 2 2v6z" fill="#0b6fc2"/><path d="M8 23.500h13" stroke="#074f92" stroke-width="1"/></svg></button>
    <button class="app run" aria-label="Edge"><svg width="30" height="30"><defs><linearGradient id="e1"><stop stop-color="#1a8be0"/><stop offset=".6" stop-color="#35c1d9"/><stop offset="1" stop-color="#62d85b"/></linearGradient></defs><circle cx="15" cy="15" r="15" fill="#0d7fd6"/><path d="M0 14C1-4 29-5 30 13c0 7-8 8-11 5 3-4-1-9-6-9C6 8 1 10 0 14z" fill="url(#e1)"/><path d="M8 15c-1 10 9 13 18 9-5 7-20 9-22-3 0-4 1-7 6-9z" fill="#0c4f9c"/><path d="M14 12c-4 6 3 14 14 10l2 3-4 5-14-8z" fill="#eee"/><path d="M26 24c-10 6-17-4-12-12-8 4-6 17 6 18z" fill="#1465b8"/></svg></button>
    <button class="app" aria-label="Microsoft Store"><svg width="30" height="30"><path d="M8 5V1h14v4" stroke="#1fb6f0" stroke-width="2"/><path d="M0 5h30v20q0 5-5 5H5q-5 0-5-5z" fill="#14508e"/><path d="M9 12h5v5H9z" fill="#f35325"/><path d="M15 12h5v5h-5z" fill="#81bc06"/><path d="M9 18h5v5H9z" fill="#05a6f0"/><path d="M15 18h5v5h-5z" fill="#ffba08"/></svg><span class="bub" style="left:25px;top:2px">2</span></button>
    <button class="app" aria-label="L app"><svg width="30" height="30"><path d="M0 0h30v30H0z" fill="#1d3fae"/><path d="M8 23l3-14v13z" fill="#0b1a4a"/><path d="M11 6h5v13h7v4H11z" fill="#fff"/></svg></button>
    <button class="app" aria-label="McAfee"><svg width="28" height="30"><path d="M0 0l14 7L28 0v22l-14 8-14-8zM6 8v11l8 5 8-5V8l-8 5z" fill="#c02f2f" fill-rule="evenodd"/></svg></button>
    <button class="app run" aria-label="WhatsApp"><svg width="30" height="30"><path d="M2 28l2-7a13 13 0 1 1 5 5z" stroke="#1d8b5a" stroke-width="3"/><path d="M9 8c2-2 3 0 4 3l-1 2c1 3 3 4 5 5l2-2c3 1 4 2 3 4-4 4-15-2-13-12z" fill="#1d8b5a"/></svg><span class="bub" style="left:23px;top:2px">16</span></button>
    <button class="app" aria-label="Mendeley"><svg width="28" height="28"><path d="M0 0h28v28H0z" fill="#ab1028"/><g fill="#fff"><circle cx="9" cy="11" r="3"/><circle cx="19" cy="11" r="3"/><circle cx="14" cy="13" r="3"/><circle cx="5" cy="18" r="2"/><circle cx="23" cy="18" r="2"/><circle cx="14" cy="18" r="2"/></g><path d="M9 11q0 5-3 6M19 11q0 5 3 6" stroke="#fff" stroke-width="3"/></svg></button>
    <button class="app run" aria-label="Chrome"><svg width="30" height="30"><circle cx="15" cy="15" r="15" fill="#ffc727"/><path d="M15 15L2 7.500A15 15 0 0 1 28 7.500H15z" fill="#e0382b"/><path d="M15 15L2 7.500A15 15 0 0 0 15 30l7-11z" fill="#2f9e4b"/><circle cx="15" cy="15" r="7.500" fill="#fff"/><circle cx="15" cy="15" r="6" fill="#2f7bf0"/></svg><span class="bub dark" style="left:26px;top:2px"></span></button>
    <button class="app run act" aria-label="AutoCAD"><svg width="28" height="30"><path d="M0 2l5-2v30l-5-3z" fill="#f0648a"/><path d="M4 0h21v21H4z" fill="#e41250"/><path d="M25 3l3 2v25H4v-9h21z" fill="#7a0a2c"/><text x="15" y="16" text-anchor="middle" font-size="16" font-weight="700" fill="#fff" font-family="Lato">A</text><text x="15" y="28" text-anchor="middle" font-size="6" font-weight="700" fill="#fff" font-family="Inter">CAD</text></svg></button>
  </div>
  <div class="wside d-flex align-items-center justify-content-end" style="padding-right:25px">
    <button aria-label="Hidden icons"><svg width="14" height="10"><path d="M1 8l6-6 6 6" stroke="#222" stroke-width="2"/></svg></button>
    <svg width="22" height="22" style="margin:0 18px 0 22px"><path d="M3 16c-4-7 1-10 4-9 4-6 10-3 10 2 5 1 5 8 0 8z" fill="#999"/><path d="M2 2l18 18" stroke="#222" stroke-width="2"/></svg>
    <svg width="22" height="22"><path d="M2 9A8 8 0 0 1 18 6M19 1v6h-6M7 19a8 8 0 0 1-5-5M2 20v-6h5" stroke="#222" stroke-width="2"/><circle cx="15" cy="16" r="5" fill="#0078d7"/></svg>
    <svg width="20" height="18" style="margin:0 10px 0 19px"><path d="M1 7a13 13 0 0 1 18 0M4 10a9 9 0 0 1 12 0M7 13a5 5 0 0 1 6 0" stroke="#222" stroke-width="1"/><circle cx="10" cy="15" r="2" fill="#222"/></svg>
    <svg width="20" height="18"><path d="M1 6h4l5-4v14l-5-4H1z" stroke="#222"/><path d="M12 6q2 3 0 6" stroke="#222"/><path d="M15 4q3 5 0 10M17 2q5 7 0 14" stroke="#aaa"/></svg>
    <svg width="20" height="22" style="margin:0 20px 0 11px"><path d="M9 6h8v11H5v-4M18 9h2v5" stroke="#222" stroke-width="2"/><path d="M1 13c-2-6 2-8 6-12 3 5 3 12-3 12l-2 4z" fill="#222"/></svg>
    <button class="text-end">6:37 PM<br>10/31/2025</button>
    <svg width="17" height="22" style="margin-left:12px"><path d="M8 3C4 3 3 6 3 9v5l-2 3h13l-1-4M6 18q2 3 4 0" stroke="#222"/><path d="M11 1h4l-4 4h4M6 8h4l-4 5h4" stroke="#222"/></svg>
  </div>
</footer>

<!-- command tooltip -->
<div class="ttip" role="tooltip">
  <p class="tip-h">Mirror</p>
  <p style="margin-top:8px">Creates a mirrored copy of selected objects</p>
  <p style="margin-top:22px">You can create objects that represent half of a drawing, select them, and mirror them across a specified line to create the other half.</p>
  <svg class="mt-1" width="434" height="250" viewBox="6 9 1302 750" stroke-width="3">
    <path d="M544 379V177C610 120 690 91 782 91 960 91 1118 220 1118 379" fill="#fefaff" stroke="#444"/>
    <path d="M440 340C490 295 525 240 544 177V340" fill="#f8f6f9" stroke="#444"/>
    <path d="M150 379C150 345 185 327 245 327 320 329 400 342 470 341H544V379" fill="#fbf8fc" stroke="#444"/>
    <path d="M479 379C480 355 500 341 535 341" stroke="#333"/>
    <path d="M150 379C155 410 185 428 245 429 320 428 390 412 440 416H544M479 379C482 402 505 416 535 416M440 416C490 465 525 520 544 579V379M544 579C610 635 690 665 782 665 960 665 1116 540 1118 379" stroke="#ff3a3a"/>
    <path d="M108 379H1190" stroke="#444" stroke-dasharray="110 17 20 14"/>
    <path d="M881 97h29v28h-29z" stroke="#2fbf10"/>
    <path d="M133 361h37v34h-37zM1099 361h37v34h-37z" stroke="#ff8a3c"/>
    <g font-family="DejaVu Sans,sans-serif" font-weight="700" font-size="48" fill="#2fbf10" text-anchor="middle"><text x="945" y="89">1</text><text x="1163" y="344">2</text><text x="126" y="340">3</text></g>
  </svg>
  <hr class="mt-1">
  <p class="tip-h d-flex align-items-center" style="gap:5px"><svg width="20" height="19"><path d="M.500.500h17v14H.500z" fill="#f6f39a" stroke="#889"/><path d="M0 0h18v2H0z" fill="#0a1fe0"/><path d="M2 10h18v9H2z" fill="#000"/><path d="M2 10v9" stroke="#0a1fe0" stroke-width="2"/><path d="M5 13h10M5 16h6" stroke="#fff" stroke-dasharray="3 1"/></svg>MIRROR</p>
  <p class="tip-h" style="margin-top:9px">Press F1 for more help</p>
</div>
</body>
</html>
